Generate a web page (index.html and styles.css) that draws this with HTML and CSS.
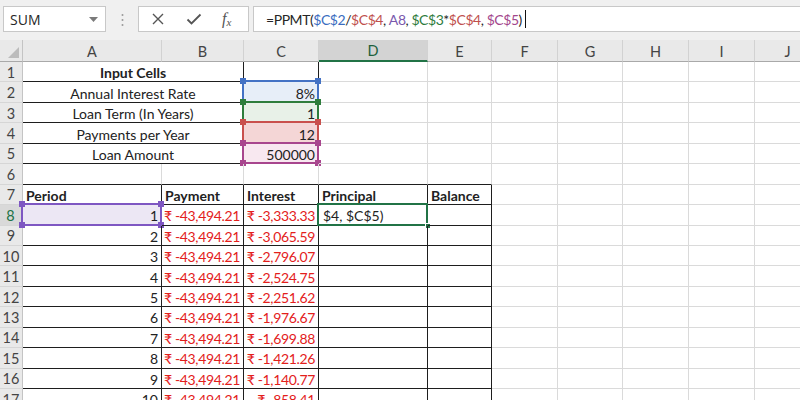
FILE: index.html
```html
<!DOCTYPE html>
<html>
<head>
<meta charset="utf-8">
<title>PPMT</title>
<link rel="stylesheet" href="styles.css">
</head>
<body>
<div class="topbar">
  <div class="namebox"><span>SUM</span><svg class="caret" width="9" height="5" viewBox="0 0 9 5"><path d="M0 0H9L4.5 5Z" fill="#7a7a7a"/></svg></div>
  <svg class="grip" width="3" height="14" viewBox="0 0 3 14"><circle cx="1.5" cy="2" r="1" fill="#9a9a9a"/><circle cx="1.5" cy="7" r="1" fill="#9a9a9a"/><circle cx="1.5" cy="12" r="1" fill="#9a9a9a"/></svg>
  <div class="fxbox">
    <svg class="ico" width="14" height="14" viewBox="0 0 14 14"><path d="M2 2L12 12M12 2L2 12" stroke="#555" stroke-width="1.4" fill="none"/></svg>
    <svg class="ico" width="16" height="14" viewBox="0 0 16 14"><path d="M1.5 7.5L5.5 11.5L14.5 2.5" stroke="#555" stroke-width="1.8" fill="none"/></svg>
    <span class="fx">f<span class="fxs">x</span></span>
  </div>
  <div class="formula">=PPMT(<span class="rb">$C$2</span>/<span class="rr">$C$4</span>, <span class="rp">A8</span>, <span class="rg">$C$3</span>*<span class="rr">$C$4</span>, <span class="rm">$C$5</span>)<span class="cursor"></span></div>
</div>

<div class="sheet">
  <!-- column headers -->
  <div class="corner"><span class="tri"></span></div>
  <div class="ch">A</div><div class="ch">B</div><div class="ch">C</div><div class="ch sel">D</div><div class="ch">E</div><div class="ch">F</div><div class="ch">G</div><div class="ch">H</div><div class="ch">I</div><div class="ch">J</div>

  <!-- row 1 -->
  <div class="rh">1</div>
  <div class="c ab br bb ctr b">Input Cells</div>
  <div class="c br"></div>
  <div class="c"></div><div class="c"></div><div class="c"></div><div class="c"></div><div class="c"></div><div class="c"></div><div class="c"></div>

  <!-- row 2 -->
  <div class="rh">2</div>
  <div class="c ab br bb ctr">Annual Interest Rate</div>
  <div class="c br bb rt fill-blue">8%<span class="hl hl-blue"><i class="h tl"></i><i class="h tr"></i><i class="h bl"></i><i class="h brc"></i></span></div>
  <div class="c"></div><div class="c"></div><div class="c"></div><div class="c"></div><div class="c"></div><div class="c"></div><div class="c"></div>

  <!-- row 3 -->
  <div class="rh">3</div>
  <div class="c ab br bb ctr">Loan Term (In Years)</div>
  <div class="c br bb rt fill-green">1<span class="hl hl-green"><i class="h tl"></i><i class="h tr"></i><i class="h bl"></i><i class="h brc"></i></span></div>
  <div class="c"></div><div class="c"></div><div class="c"></div><div class="c"></div><div class="c"></div><div class="c"></div><div class="c"></div>

  <!-- row 4 -->
  <div class="rh">4</div>
  <div class="c ab br bb ctr">Payments per Year</div>
  <div class="c br bb rt fill-red">12<span class="hl hl-red"><i class="h tl"></i><i class="h tr"></i><i class="h bl"></i><i class="h brc"></i></span></div>
  <div class="c"></div><div class="c"></div><div class="c"></div><div class="c"></div><div class="c"></div><div class="c"></div><div class="c"></div>

  <!-- row 5 -->
  <div class="rh">5</div>
  <div class="c ab br bb ctr">Loan Amount</div>
  <div class="c br bb rt fill-mag">500000<span class="hl hl-mag"><i class="h tl"></i><i class="h tr"></i><i class="h bl"></i><i class="h brc"></i></span></div>
  <div class="c"></div><div class="c"></div><div class="c"></div><div class="c"></div><div class="c"></div><div class="c"></div><div class="c"></div>

  <!-- row 6 -->
  <div class="rh">6</div>
  <div class="c bb"></div><div class="c bb"></div><div class="c bb"></div><div class="c bb"></div><div class="c bb"></div>
  <div class="c"></div><div class="c"></div><div class="c"></div><div class="c"></div><div class="c"></div>

  <!-- row 7 -->
  <div class="rh">7</div>
  <div class="c br bb b">Period</div><div class="c br bb b">Payment</div><div class="c br bb b">Interest</div><div class="c br bb b">Principal</div><div class="c br bb b">Balance</div>
  <div class="c"></div><div class="c"></div><div class="c"></div><div class="c"></div><div class="c"></div>

  <!-- row 8 -->
  <div class="rh rsel">8</div>
  <div class="c br bb rt fill-purple">1<span class="hl hl-purple"><i class="h tl"></i><i class="h tr"></i><i class="h bl"></i><i class="h brc"></i></span></div>
  <div class="c br bb rt neg">₹ -43,494.21</div><div class="c br bb rt neg">₹ -3,333.33</div>
  <div class="c br bb edit">$4, $C$5)<span class="hl hl-active"><i class="fillh"></i></span></div><div class="c br bb"></div>
  <div class="c"></div><div class="c"></div><div class="c"></div><div class="c"></div><div class="c"></div>

  <!-- row 9 -->
  <div class="rh">9</div>
  <div class="c br bb rt">2</div><div class="c br bb rt neg">₹ -43,494.21</div><div class="c br bb rt neg">₹ -3,065.59</div><div class="c br bb"></div><div class="c br bb"></div>
  <div class="c"></div><div class="c"></div><div class="c"></div><div class="c"></div><div class="c"></div>

  <!-- row 10 -->
  <div class="rh">10</div>
  <div class="c br bb rt">3</div><div class="c br bb rt neg">₹ -43,494.21</div><div class="c br bb rt neg">₹ -2,796.07</div><div class="c br bb"></div><div class="c br bb"></div>
  <div class="c"></div><div class="c"></div><div class="c"></div><div class="c"></div><div class="c"></div>

  <!-- row 11 -->
  <div class="rh">11</div>
  <div class="c br bb rt">4</div><div class="c br bb rt neg">₹ -43,494.21</div><div class="c br bb rt neg">₹ -2,524.75</div><div class="c br bb"></div><div class="c br bb"></div>
  <div class="c"></div><div class="c"></div><div class="c"></div><div class="c"></div><div class="c"></div>

  <!-- row 12 -->
  <div class="rh">12</div>
  <div class="c br bb rt">5</div><div class="c br bb rt neg">₹ -43,494.21</div><div class="c br bb rt neg">₹ -2,251.62</div><div class="c br bb"></div><div class="c br bb"></div>
  <div class="c"></div><div class="c"></div><div class="c"></div><div class="c"></div><div class="c"></div>

  <!-- row 13 -->
  <div class="rh">13</div>
  <div class="c br bb rt">6</div><div class="c br bb rt neg">₹ -43,494.21</div><div class="c br bb rt neg">₹ -1,976.67</div><div class="c br bb"></div><div class="c br bb"></div>
  <div class="c"></div><div class="c"></div><div class="c"></div><div class="c"></div><div class="c"></div>

  <!-- row 14 -->
  <div class="rh">14</div>
  <div class="c br bb rt">7</div><div class="c br bb rt neg">₹ -43,494.21</div><div class="c br bb rt neg">₹ -1,699.88</div><div class="c br bb"></div><div class="c br bb"></div>
  <div class="c"></div><div class="c"></div><div class="c"></div><div class="c"></div><div class="c"></div>

  <!-- row 15 -->
  <div class="rh">15</div>
  <div class="c br bb rt">8</div><div class="c br bb rt neg">₹ -43,494.21</div><div class="c br bb rt neg">₹ -1,421.26</div><div class="c br bb"></div><div class="c br bb"></div>
  <div class="c"></div><div class="c"></div><div class="c"></div><div class="c"></div><div class="c"></div>

  <!-- row 16 -->
  <div class="rh">16</div>
  <div class="c br bb rt">9</div><div class="c br bb rt neg">₹ -43,494.21</div><div class="c br bb rt neg">₹ -1,140.77</div><div class="c br bb"></div><div class="c br bb"></div>
  <div class="c"></div><div class="c"></div><div class="c"></div><div class="c"></div><div class="c"></div>

  <!-- row 17 -->
  <div class="rh">17</div>
  <div class="c br bb rt">10</div><div class="c br bb rt neg">₹ -43,494.21</div><div class="c br bb rt neg">₹ -858.41</div><div class="c br bb"></div><div class="c br bb"></div>
  <div class="c"></div><div class="c"></div><div class="c"></div><div class="c"></div><div class="c"></div>
</div>
</body>
</html>
```

FILE: styles.css
```css
* { box-sizing: border-box; }

body {
  margin: 0;
  width: 800px;
  height: 400px;
  overflow: hidden;
  background: #ffffff;
  font-family: "Lato", "Noto Sans", "DejaVu Sans", sans-serif;
}

/* ---------- formula bar ---------- */
.topbar {
  height: 40px;
  background: #f0f0f0;
  display: flex;
  align-items: flex-start;
  padding-top: 6px;
  overflow: hidden;
}

.namebox {
  margin-left: 3px;
  width: 103px;
  height: 26px;
  background: #fff;
  border: 1px solid #c8c8c8;
  display: flex;
  align-items: center;
  justify-content: space-between;
  padding: 0 7px 0 6px;
  font-family: "Open Sans", "Noto Sans", sans-serif;
  font-size: 14px;
  color: #262626;
}

.grip {
  margin: 7px 14px 0 15px;
  flex: none;
}

.fxbox {
  flex: none;
  width: 111px;
  height: 26px;
  background: #fff;
  border: 1px solid #c8c8c8;
  display: flex;
  align-items: center;
  padding-left: 12px;
  gap: 21px;
}

.ico { flex: none; }

.fx {
  font-family: "Liberation Serif", serif;
  font-style: italic;
  font-size: 16px;
  color: #555;
  margin-left: -1px;
}

.fxs {
  font-size: 11px;
  position: relative;
  top: 2px;
}

.formula {
  flex: 1;
  margin-left: 4px;
  height: 26px;
  background: #fff;
  border: 1px solid #c8c8c8;
  border-right: none;
  display: flex;
  align-items: center;
  padding-left: 12px;
  font-size: 14px;
  letter-spacing: -0.45px;
  color: #262626;
  white-space: pre;
}

.rb { color: #3a6cc0; }
.rr { color: #c0504d; }
.rp { color: #7a58ad; }
.rg { color: #2e7b3c; }
.rm { color: #a3468c; }

.cursor {
  display: inline-block;
  width: 1px;
  height: 18px;
  background: #111;
  margin-left: 3px;
}

/* ---------- sheet grid ---------- */
.sheet {
  display: grid;
  grid-template-columns: 23px 139px 82px 75px 109px 64px 66px 65px 66px 66px 66px;
  grid-template-rows: 22px repeat(17, 20.45px);
  width: 821px;
}

.corner {
  background: #e9e9e9;
  border-right: 1px solid #c4c4c4;
  border-bottom: 1px solid #a9a9a9;
  position: relative;
}

.tri {
  position: absolute;
  right: 3px;
  bottom: 3px;
  width: 0;
  height: 0;
  border-left: 11px solid transparent;
  border-bottom: 11px solid #bcbcbc;
}

.ch {
  background: #e9e9e9;
  border-right: 1px solid #d2d2d2;
  border-bottom: 1px solid #a9a9a9;
  display: flex;
  align-items: center;
  justify-content: center;
  font-size: 14.5px;
  color: #444;
  padding-top: 1px;
}

.ch.sel {
  background: #d3d3d3;
  border-bottom: 2px solid #217346;
  color: #215f3c;
}

.rh {
  background: #e9e9e9;
  border-right: 1px solid #c4c4c4;
  border-bottom: 1px solid #d6d6d6;
  display: flex;
  align-items: center;
  justify-content: center;
  font-size: 14.5px;
  color: #444;
  padding-top: 1px;
}

.rh.rsel {
  background: #d9d9d9;
  border-right: 2px solid #217346;
  color: #217346;
}

.c {
  position: relative;
  border-right: 1px solid #dadada;
  border-bottom: 1px solid #dadada;
  display: flex;
  align-items: center;
  padding: 2px 3px 0 3px;
  font-size: 14px;
  color: #222;
  white-space: nowrap;
}

.ab { grid-column: span 2; }
.br { border-right-color: #1e1e1e; }
.bb { border-bottom-color: #1e1e1e; }
.ctr { justify-content: center; }
.rt { justify-content: flex-end; }
.b { font-weight: 700; }
.neg { color: #e3201b; letter-spacing: -0.35px; }
.edit { padding-left: 4px; }

.fill-blue { background: #e7eef8; }
.fill-green { background: #e8f1e8; }
.fill-red { background: #f4d6d6; }
.fill-mag { background: #f8e8f0; }
.fill-purple { background: #ece7f4; }

/* range highlights drawn over the cells */
.hl {
  position: absolute;
  top: -2px;
  left: -2px;
  right: -1px;
  bottom: -1px;
  border: 2px solid;
  pointer-events: none;
}

.hl-blue { border-color: #4472c4; }
.hl-green { border-color: #2e7d3c; }
.hl-red { border-color: #c9504d; }
.hl-mag { border-color: #a8468e; }
.hl-purple { border-color: #7e57c2; }
.hl-active { border-color: #217346; }

.h {
  position: absolute;
  width: 6px;
  height: 6px;
}

.hl-blue .h { background: #4472c4; }
.hl-green .h { background: #2e7d3c; }
.hl-red .h { background: #c9504d; }
.hl-mag .h { background: #a8468e; }
.hl-purple .h { background: #7e57c2; }

.tl { top: -4px; left: -4px; }
.tr { top: -4px; right: -4px; }
.bl { bottom: -4px; left: -4px; }
.brc { bottom: -4px; right: -4px; }

.fillh {
  position: absolute;
  right: -5px;
  bottom: -5px;
  width: 6px;
  height: 6px;
  background: #217346;
  border: 1px solid #fff;
}
```
